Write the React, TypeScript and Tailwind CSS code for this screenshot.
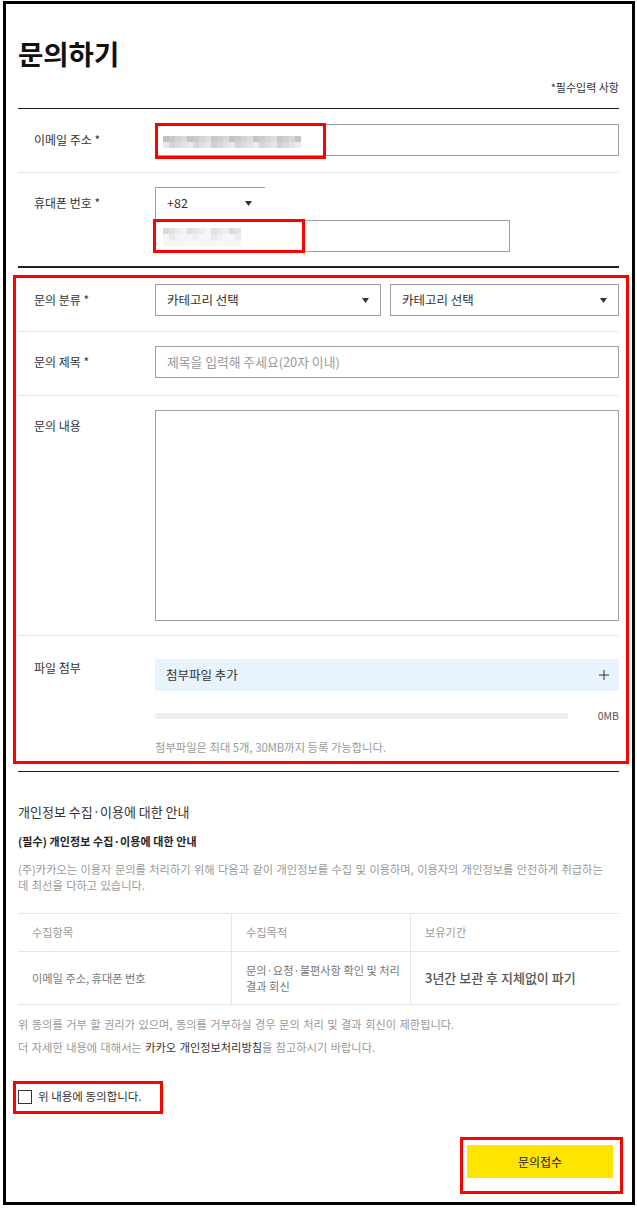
import React from 'react';

const Caret = () => (
  <svg width="7" height="5" viewBox="0 0 7 5" className="shrink-0">
    <path d="M0 0h7L3.5 5z" fill="#333" />
  </svg>
);

// blurred (mosaic) personal data
const Mosaic = ({ cols, rows, base }: { cols: number; rows: number; base: number }) => (
  <div className="flex flex-col">
    {Array.from({ length: rows }).map((_, r) => (
      <div key={r} className="flex">
        {Array.from({ length: cols }).map((_, i) => {
          const v = base + r * 14 + ((i * 37 + r * 53) % 29);
          const c = Math.min(v, 246);
          const tint = (i * 11 + r * 7) % 5;
          return (
            <div
              key={i}
              className="w-[6px] h-[6px]"
              style={{ background: `rgb(${c - 2 + tint}, ${c - 1}, ${c + 4 - tint})` }}
            />
          );
        })}
      </div>
    ))}
  </div>
);

const Label = ({ children, className = '' }: { children: React.ReactNode; className?: string }) => (
  <div className={`w-[137px] shrink-0 pl-4 leading-8 text-[12px] text-[#333] ${className}`}>{children}</div>
);

const RedBox = ({ className }: { className: string }) => (
  <div className={`absolute border-[3px] border-[#ff0000] pointer-events-none ${className}`} />
);

export default function App() {
  return (
    <div className="relative w-[637px] h-[1208px] bg-white pt-[1px] pl-[3px] font-['Noto_Sans_CJK_KR','Liberation_Sans',sans-serif]">
      <div className="w-[632px] h-[1204px] border-[3px] border-black pl-[12px] pr-[13px]">
        {/* header */}
        <div className="pt-[33px] border-b border-[#222] pb-[14px]">
          <h1 className="text-[27.5px] leading-8 font-bold text-[#111]">문의하기</h1>
          <p className="mt-[11px] text-right text-[11px] leading-[14px] text-[#333]">*필수입력 사항</p>
        </div>

        {/* email */}
        <div className="flex border-b border-[#e5e5e5] pt-[15px] pb-[16px]">
          <Label>이메일 주소 *</Label>
          <div className="flex-1">
            <div className="h-8 border border-[#a0a0a0] flex items-center pl-[7px] pt-[3px]">
              <Mosaic cols={23} rows={2} base={194} />
            </div>
          </div>
        </div>

        {/* phone */}
        <div className="flex border-b-2 border-[#222] pt-[14px] pb-[14px]">
          <Label>휴대폰 번호 *</Label>
          <div className="flex-1">
            <div className="h-8 w-[110px] border-t border-l border-[#a0a0a0] flex items-center justify-between pl-[11px] pr-[13px] text-[12.5px] text-[#333]">
              <span>+82</span>
              <Caret />
            </div>
            <div className="mt-[1px] h-8 w-[355px] border border-[#a0a0a0] flex items-center pl-[7px] pt-[2px]">
              <Mosaic cols={13} rows={3} base={218} />
            </div>
          </div>
        </div>

        {/* category */}
        <div className="flex border-b border-[#e5e5e5] pt-4 pb-[15px]">
          <Label>문의 분류 *</Label>
          <div className="flex-1 flex gap-[9px]">
            <div className="h-8 w-[226px] border border-[#a0a0a0] flex items-center justify-between pl-[11px] pr-[11px] text-[12.5px] text-[#333]">
              <span>카테고리 선택</span>
              <Caret />
            </div>
            <div className="h-8 flex-1 border border-[#a0a0a0] flex items-center justify-between pl-[11px] pr-[11px] text-[12.5px] text-[#333]">
              <span>카테고리 선택</span>
              <Caret />
            </div>
          </div>
        </div>

        {/* title */}
        <div className="flex border-b border-[#e5e5e5] pt-[14px] pb-[17px]">
          <Label>문의 제목 *</Label>
          <div className="flex-1">
            <div className="h-8 border border-[#a0a0a0] flex items-center pl-[11px] text-[12.8px] text-[#999]">
              제목을 입력해 주세요(20자 이내)
            </div>
          </div>
        </div>

        {/* content */}
        <div className="flex border-b border-[#e5e5e5] pt-[14px] pb-[14px]">
          <Label>문의 내용</Label>
          <div className="flex-1">
            <div className="h-[211px] border border-[#a0a0a0]" />
          </div>
        </div>

        {/* file */}
        <div className="flex border-b border-[#222] pb-4">
          <Label className="pt-4">파일 첨부</Label>
          <div className="flex-1 pt-[23px]">
            <div className="h-8 bg-[#e9f3fd] flex items-center justify-between pl-[11px] pr-[10px] text-[12.5px] text-[#333]">
              <span>첨부파일 추가</span>
              <svg width="10" height="10" viewBox="0 0 10 10">
                <path d="M5 0v10M0 5h10" stroke="#333" strokeWidth="1" />
              </svg>
            </div>
            <div className="mt-5 h-[10px] flex items-center">
              <div className="w-[413px] h-[6px] bg-[#efefef]" />
              <span className="ml-auto text-[10.5px] leading-[10px] text-[#555]">0MB</span>
            </div>
            <p className="mt-[18px] text-[11.3px] leading-4 text-[#999]">
              첨부파일은 최대 5개, 30MB까지 등록 가능합니다.
            </p>
          </div>
        </div>

        {/* privacy */}
        <div>
          <h2 className="mt-[31px] text-[13px] leading-[18px] text-[#333]">개인정보 수집·이용에 대한 안내</h2>
          <h3 className="mt-3 text-[11px] leading-4 font-bold tracking-[0.1px] text-[#222]">(필수) 개인정보 수집·이용에 대한 안내</h3>
          <p className="mt-3 text-[11.2px] leading-4 [word-spacing:1px] text-[#999]">
            (주)카카오는 이용자 문의를 처리하기 위해 다음과 같이 개인정보를 수집 및 이용하며, 이용자의 개인정보를 안전하게 취급하는
            <br />데 최선을 다하고 있습니다.
          </p>

          <div className="mt-5 grid grid-cols-[213px_179px_1fr] border-b border-[#e5e5e5] text-[11.2px]">
            <div className="h-[38px] border-t border-[#e5e5e5] flex items-center pl-[14px] text-[#999]">수집항목</div>
            <div className="h-[38px] border-t border-l border-[#e5e5e5] flex items-center pl-[14px] text-[#999]">수집목적</div>
            <div className="h-[38px] border-t border-l border-[#e5e5e5] flex items-center pl-[14px] text-[#999]">보유기간</div>
            <div className="h-[53px] border-t border-[#e5e5e5] flex items-center pl-[14px] text-[#777]">이메일 주소, 휴대폰 번호</div>
            <div className="h-[53px] border-t border-l border-[#e5e5e5] flex items-center pl-[14px] pr-[10px] leading-4 text-[#777]">
              문의·요청·불편사항 확인 및 처리 결과 회신
            </div>
            <div className="h-[53px] border-t border-l border-[#e5e5e5] flex items-center pl-[14px] text-[13px] font-medium text-[#555]">
              3년간 보관 후 지체없이 파기
            </div>
          </div>

          <p className="mt-[11px] text-[11.2px] leading-4 [word-spacing:1px] text-[#999]">
            위 동의를 거부 할 권리가 있으며, 동의를 거부하실 경우 문의 처리 및 결과 회신이 제한됩니다.
          </p>
          <p className="mt-[7px] text-[11.2px] leading-4 [word-spacing:1px] text-[#999]">
            더 자세한 내용에 대해서는 <span className="text-[#333]">카카오 개인정보처리방침</span>을 참고하시기 바랍니다.
          </p>

          <label className="mt-[35px] flex items-center h-[14px] gap-[6px] text-[11.5px] text-[#333]">
            <span className="w-[14px] h-[14px] border border-[#333] bg-white" />
            <span>위 내용에 동의합니다.</span>
          </label>

          <div className="mt-[41px] flex justify-end pr-[6px]">
            <button className="w-[146px] h-[33px] bg-[#ffe400] text-[12px] text-[#222]">문의접수</button>
          </div>
        </div>
      </div>

      {/* annotation boxes */}
      <RedBox className="left-[155px] top-[123px] w-[171px] h-[36px]" />
      <RedBox className="left-[153px] top-[219px] w-[152px] h-[34px]" />
      <RedBox className="left-[13px] top-[275px] w-[616px] h-[489px]" />
      <RedBox className="left-[13px] top-[1081px] w-[150px] h-[33px]" />
      <RedBox className="left-[460px] top-[1137px] w-[163px] h-[57px]" />
    </div>
  );
}
